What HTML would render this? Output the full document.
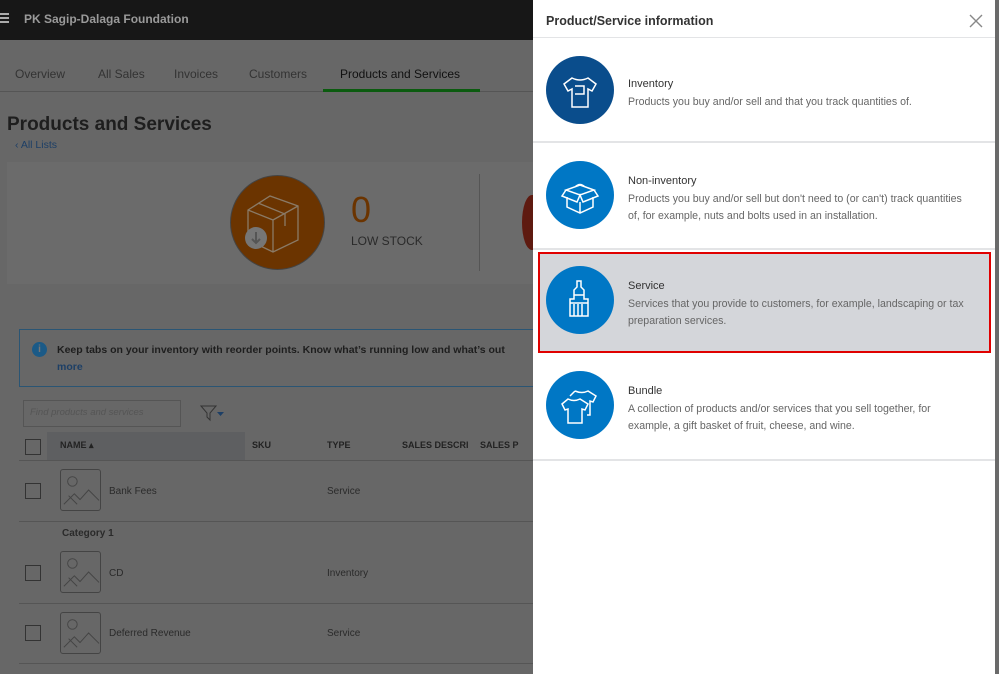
<!DOCTYPE html>
<html><head><meta charset="utf-8"><style>
*{margin:0;padding:0;box-sizing:border-box}
body{width:999px;height:674px;overflow:hidden;position:relative;background:#676767;font-family:"Liberation Sans",sans-serif}
.a{position:absolute}
.top{left:0;top:0;width:999px;height:40px;background:#171717;color:#9a9a9a;font-size:12px;font-weight:bold}
.tab{top:67px;font-size:12px;color:#222}
.hd{top:440px;font-size:9px;font-weight:bold;color:#222}
.cb{width:16px;height:16px;border:1px solid #333;left:25px}
.img{left:60px;width:41px;height:42px;border:1px solid #444;border-radius:3px}
.t{font-size:10px;color:#2a2a2a}
.panel{left:533px;top:0;width:462px;height:674px;background:#fff}
.row{position:absolute;left:0;width:462px;border-bottom:2px solid #e3e4e6}
.circ{position:absolute;left:13px;width:68px;height:68px;border-radius:50%;background:#0077c5}
.ti{position:absolute;left:95px;font-size:11px;color:#333}
.de{position:absolute;left:95px;font-size:10.6px;color:#666;line-height:17px;width:342px}
</style></head><body>
<div class="a top"><div class="a" style="left:0;top:13px;width:9px;height:2px;background:#aaa;box-shadow:0 4px #aaa,0 8px #aaa"></div><div class="a" style="left:24px;top:12px">PK Sagip-Dalaga Foundation</div></div>
<div class="a" style="left:0;top:91px;width:533px;height:1px;background:#555"></div>
<div class="a tab" style="left:15px;color:#333">Overview</div>
<div class="a tab" style="left:98px;color:#333">All Sales</div>
<div class="a tab" style="left:174px;color:#333">Invoices</div>
<div class="a tab" style="left:249px;color:#333">Customers</div>
<div class="a tab" style="left:340px;color:#111">Products and Services</div>
<div class="a" style="left:323px;top:89px;width:157px;height:3px;background:#0b5b0f"></div>
<div class="a" style="left:7px;top:114px;font-size:19px;font-weight:bold;color:#1e1e1e">Products and Services</div>
<div class="a" style="left:15px;top:139px;font-size:10.5px;color:#1d3f66">‹ All Lists</div>
<div class="a" style="left:7px;top:162px;width:526px;height:122px;background:#6b6b6b"></div>
<div class="a" style="left:230px;top:175px;width:95px;height:95px;border-radius:50%;background:#6b3400;border:1px solid #444"></div>
<svg class="a" style="left:240px;top:190px" width="70" height="70" viewBox="0 0 70 70" fill="none" stroke="#8a7a66" stroke-width="1.3"><path d="M8 20 L30 6 L58 16 L58 50 L33 62 L8 50Z M8 20 L33 30 L58 16 M33 30 V62 M18 13 L45 24 V36"/><circle cx="16" cy="48" r="11" fill="#767676" stroke="none"/><path d="M16 42 V53 M12 49 L16 53 L20 49" stroke="#555" stroke-width="2"/></svg>
<div class="a" style="left:351px;top:190px;font-size:36px;color:#6b3400;line-height:40px">0</div>
<div class="a" style="left:351px;top:234px;font-size:12px;color:#2a2a2a">LOW STOCK</div>
<div class="a" style="left:479px;top:174px;width:1px;height:97px;background:#555"></div>
<div class="a" style="left:522px;top:195px;width:20px;height:55px;border-radius:50% 0 0 50%;background:#5e1a10"></div>
<div class="a" style="left:19px;top:329px;width:520px;height:58px;border:1px solid #2a5574;background:#676767"></div>
<div class="a" style="left:32px;top:342px;width:15px;height:15px;border-radius:50%;background:#1b5a87;color:#777;font-size:10px;font-weight:bold;text-align:center;line-height:15px">i</div>
<div class="a" style="left:57px;top:344px;font-size:10.5px;color:#1e1e1e;font-weight:bold;white-space:nowrap">Keep tabs on your inventory with reorder points. Know what’s running low and what’s out</div>
<div class="a" style="left:57px;top:361px;font-size:10.5px;color:#1d3f66;font-weight:bold">more</div>
<div class="a" style="left:23px;top:400px;width:158px;height:27px;border:1px solid #555"></div>
<div class="a" style="left:30px;top:407px;font-size:9.5px;font-style:italic;color:#555">Find products and services</div>
<svg class="a" style="left:200px;top:404px" width="28" height="18"><path d="M1 2 H16 L10 9 V16 L7 13 V9Z" fill="none" stroke="#333"/><path d="M17 8 H24 L20.5 12Z" fill="#1d3f66"/></svg>
<div class="a" style="left:47px;top:432px;width:198px;height:28px;background:#5e5f61"></div>
<div class="a" style="left:19px;top:460px;width:514px;height:1px;background:#555"></div>
<div class="a cb" style="top:439px"></div>
<div class="a hd" style="left:60px">NAME ▴</div>
<div class="a hd" style="left:252px">SKU</div>
<div class="a hd" style="left:327px">TYPE</div>
<div class="a hd" style="left:402px">SALES DESCRI</div>
<div class="a hd" style="left:480px">SALES P</div>
<div class="a cb" style="top:483px"></div><svg class="a img" style="top:469px" viewBox="0 0 41 42" fill="none" stroke="#444"><circle cx="12" cy="12" r="5"/><path d="M3 36 L14 25 L20 31 L29 21 L40 32 M8 27 L17 36"/></svg><div class="a t" style="left:109px;top:486px">Bank Fees</div><div class="a t" style="left:327px;top:486px">Service</div>
<div class="a" style="left:19px;top:521px;width:514px;height:1px;background:#555"></div>
<div class="a t" style="left:62px;top:528px;font-weight:bold">Category 1</div>
<div class="a cb" style="top:565px"></div><svg class="a img" style="top:551px" viewBox="0 0 41 42" fill="none" stroke="#444"><circle cx="12" cy="12" r="5"/><path d="M3 36 L14 25 L20 31 L29 21 L40 32 M8 27 L17 36"/></svg><div class="a t" style="left:109px;top:568px">CD</div><div class="a t" style="left:327px;top:568px">Inventory</div>
<div class="a" style="left:19px;top:603px;width:514px;height:1px;background:#555"></div>
<div class="a cb" style="top:625px"></div><svg class="a img" style="top:612px" viewBox="0 0 41 42" fill="none" stroke="#444"><circle cx="12" cy="12" r="5"/><path d="M3 36 L14 25 L20 31 L29 21 L40 32 M8 27 L17 36"/></svg><div class="a t" style="left:109px;top:628px">Deferred Revenue</div><div class="a t" style="left:327px;top:628px">Service</div>
<div class="a" style="left:19px;top:663px;width:514px;height:1px;background:#555"></div>
<div class="a" style="left:995px;top:0;width:4px;height:674px;background:#6a6a6a"></div>
<div class="a panel">
<div style="position:absolute;left:13px;top:14px;font-size:12.5px;font-weight:bold;color:#333">Product/Service information</div>
<svg style="position:absolute;left:436px;top:14px" width="14" height="14"><path d="M1 1L13 13M13 1L1 13" stroke="#888" stroke-width="1.4"/></svg>
<div class="row" style="top:37px;height:0;border-bottom:1px solid #e3e4e6"></div>
<div class="row" style="top:38px;height:105px"><div class="circ" style="top:18px;background:#0a4d8c"></div>
<svg style="position:absolute;left:27px;top:34px" width="40" height="40" fill="none" stroke="#fff" stroke-width="1.5"><path d="M12 6 L4 12 L8 19 L12 17 V35 H28 V17 L32 19 L36 12 L28 6 Q20 10 12 6Z M15 14 H24 V22 H15"/></svg>
<div class="ti" style="top:40px">Inventory</div><div class="de" style="top:56px">Products you buy and/or sell and that you track quantities of.</div></div>
<div class="row" style="top:143px;height:107px"><div class="circ" style="top:18px"></div>
<svg style="position:absolute;left:27px;top:34px" width="40" height="40" fill="none" stroke="#fff" stroke-width="1.5"><path d="M20 8 L34 13 L20 18 L6 13Z M6 13 L2 19 L17 25 L20 18 L23 25 L38 19 L34 13 M7 20 V30 L20 36 L33 30 V20 M20 25 V36 M15 10 Q20 5 25 10"/></svg>
<div class="ti" style="top:32px">Non-inventory</div><div class="de" style="top:48px">Products you buy and/or sell but don't need to (or can't) track quantities of, for example, nuts and bolts used in an installation.</div></div>
<div style="position:absolute;left:5px;top:252px;width:453px;height:101px;background:#d4d6da;border:2px solid #e00000"></div>
<div class="circ" style="top:266px"></div>
<svg style="position:absolute;left:27px;top:279px" width="40" height="42" fill="none" stroke="#fff" stroke-width="1.5"><path d="M17 2 H21 V8 L24 11 V20 H28 V37 H10 V20 H14 V11 L17 8Z M14 16 H24 M14 25 V37 M18 25 V37 M22 25 V37 M10 24 H28"/></svg>
<div class="ti" style="top:280px">Service</div><div class="de" style="top:296px">Services that you provide to customers, for example, landscaping or tax preparation services.</div>
<div class="row" style="top:354px;height:107px"><div class="circ" style="top:17px"></div>
<svg style="position:absolute;left:27px;top:31px" width="40" height="40" fill="none" stroke="#fff" stroke-width="1.5"><path d="M15 6 Q22 9 28 6 L36 11 L33 17 L30 16 V30 H27 M8 14 Q14 17 20 14 L28 19 L25 25 L22 24 V38 H8 V24 L5 25 L2 19Z M15 6 L10 11"/></svg>
<div class="ti" style="top:31px">Bundle</div><div class="de" style="top:47px">A collection of products and/or services that you sell together, for example, a gift basket of fruit, cheese, and wine.</div></div>
</div>
</body></html>
